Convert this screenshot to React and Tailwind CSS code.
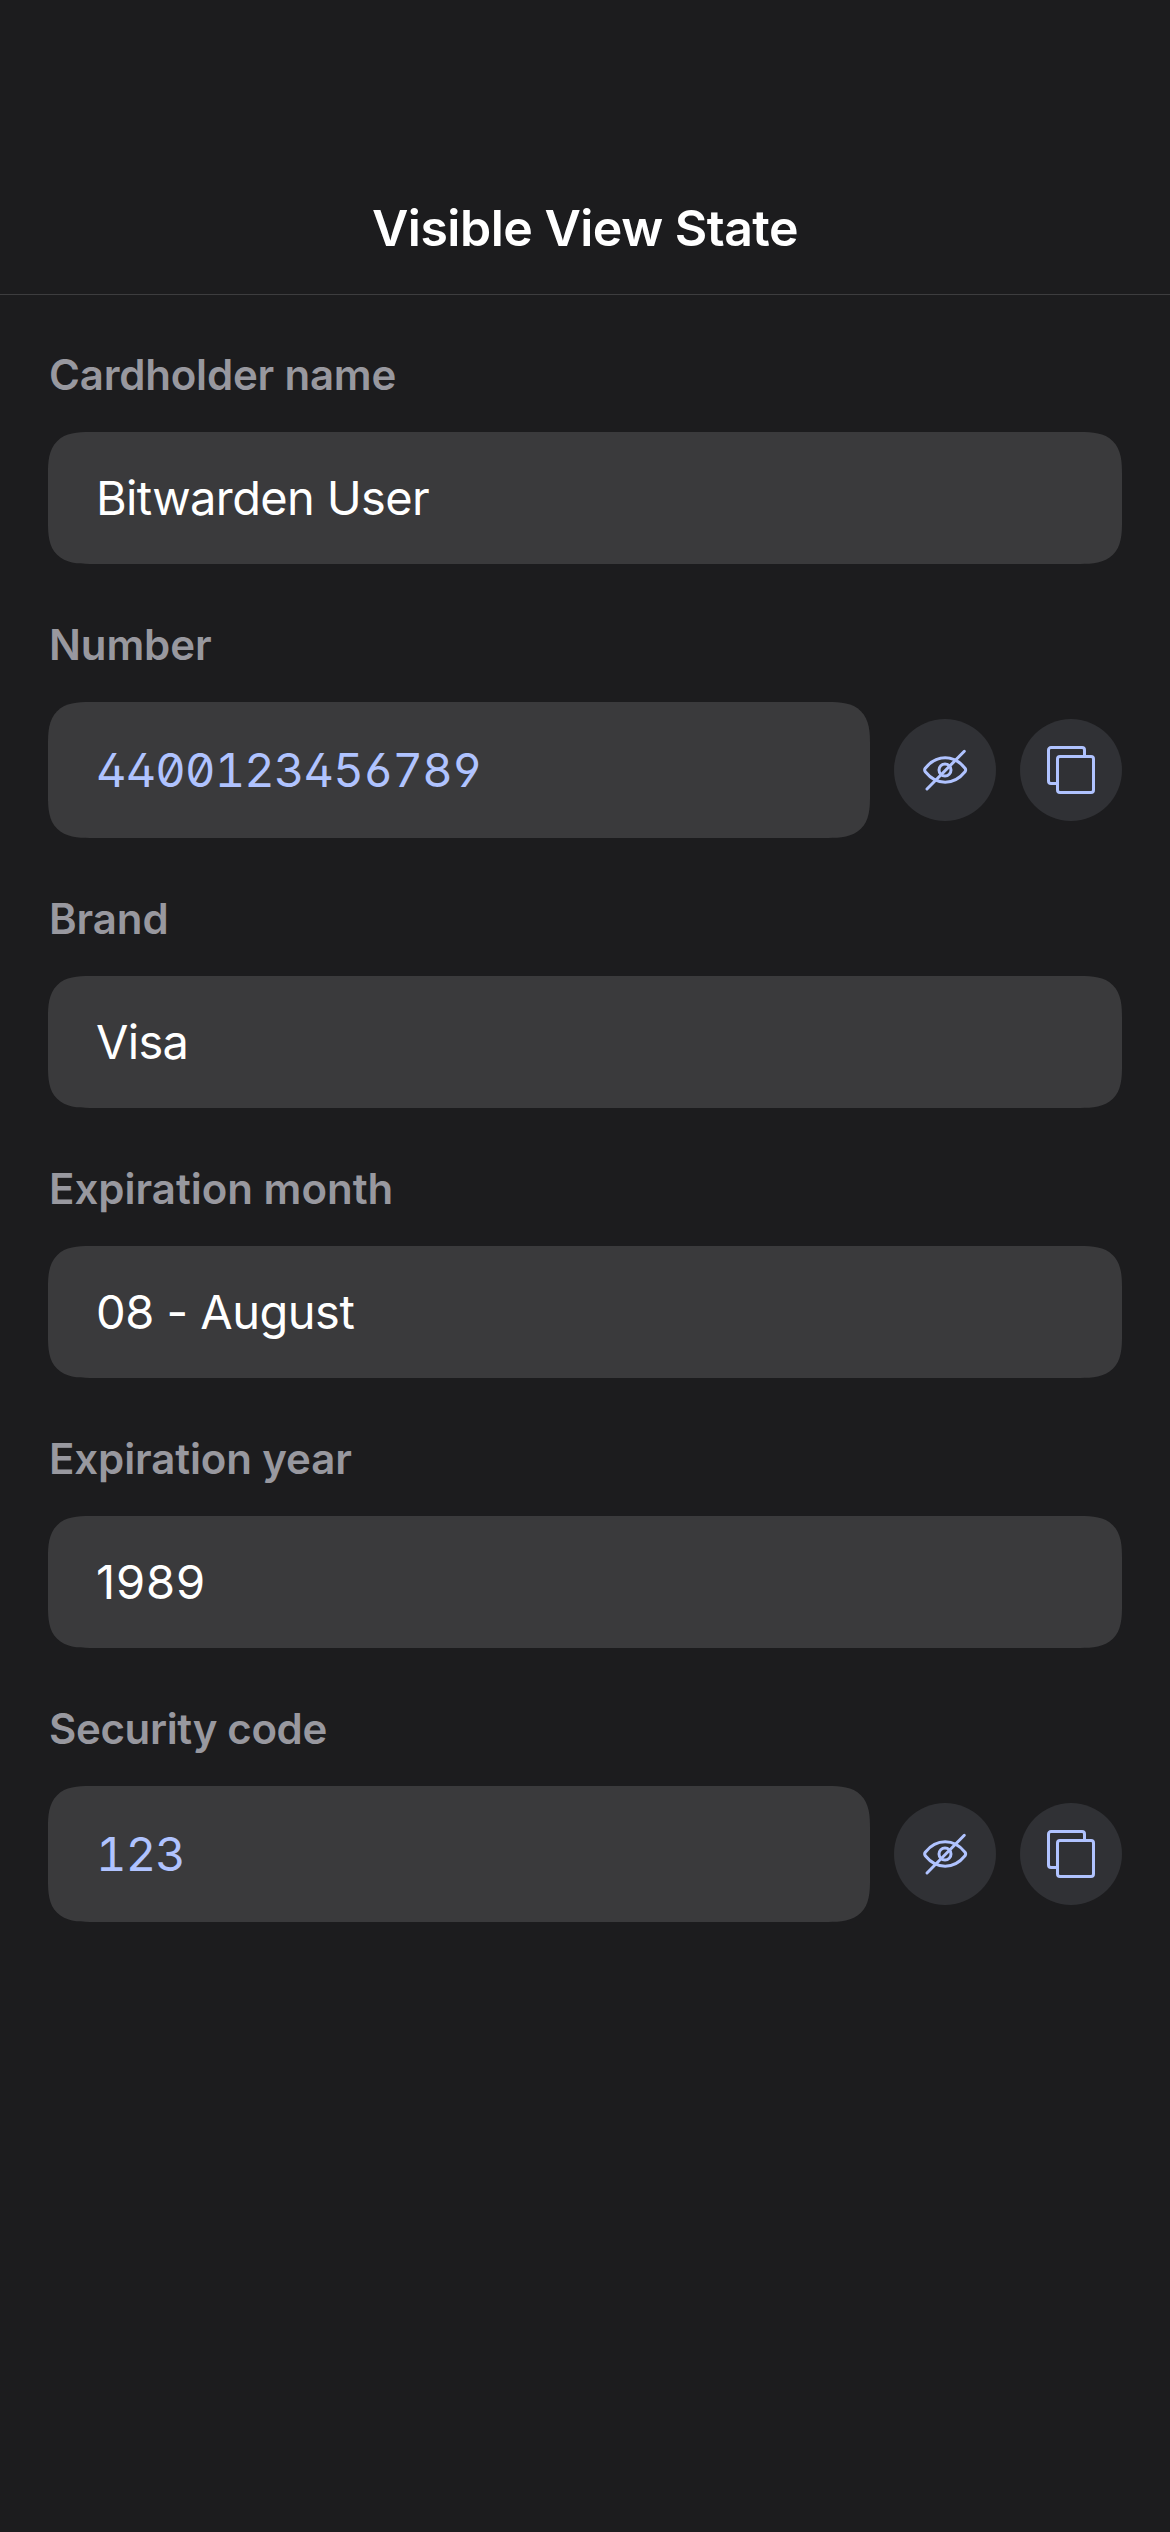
function EyeSlashIcon() {
  return (
    <svg width="48" height="48" viewBox="0 0 48 48" fill="none" stroke="currentColor" strokeWidth="3" strokeLinecap="round" strokeLinejoin="round" aria-hidden="true">
      <path d="M4.300 22.200C9.600 15.600 16.400 11.800 24.200 11.800s14.500 3.800 19.800 10.400q1.300 1.800 0 3.600C38.700 32.400 32 36.200 24.200 36.200S9.600 32.400 4.300 25.800q-1.300-1.800 0-3.600Z" />
      <circle cx="24" cy="24" r="6" />
      <path d="M6 43L43.300 5.300" />
    </svg>
  );
}

function CopyIcon() {
  return (
    <svg width="48" height="48" viewBox="0 0 48 48" fill="none" stroke="currentColor" strokeWidth="3" aria-hidden="true">
      <rect x="10.500" y="10.500" width="36" height="36" rx="2.500" />
      <path d="M37.500 10V4a2.500 2.500 0 0 0-2.500-2.500H4A2.500 2.500 0 0 0 1.500 4v31a2.500 2.500 0 0 0 2.500 2.500h6" />
    </svg>
  );
}

function IconButton({ label, children }) {
  return (
    <button type="button" aria-label={label} className="flex size-[102px] shrink-0 items-center justify-center rounded-full bg-[#303135] text-[#b0c3ff]">
      {children}
    </button>
  );
}

const fields = [
  { label: "Cardholder name", labelTracking: "tracking-[-0.2px]", value: "Bitwarden User", tracking: "tracking-[-0.64px]" },
  { label: "Number", labelTracking: "tracking-[-0.1px]", value: "4400123456789", secret: true },
  { label: "Brand", labelTracking: "tracking-[-0.1px]", value: "Visa", tracking: "tracking-[-0.7px]" },
  { label: "Expiration month", labelTracking: "tracking-normal", value: "08 - August", tracking: "tracking-[-0.5px]" },
  { label: "Expiration year", labelTracking: "tracking-[-0.12px]", value: "1989", tracking: "tracking-[0.9px]" },
  { label: "Security code", labelTracking: "tracking-[-0.35px]", value: "123", secret: true },
];

function Field({ label, labelTracking, value, tracking, secret }) {
  return (
    <div className="flex flex-col">
      <div className={`flex h-[138px] items-end pb-8 pl-px text-[42px] leading-[51px] font-semibold text-[#98989f] ${labelTracking}`}>{label}</div>
      <div className="flex items-center gap-6">
        {secret ? (
          <div className="flex h-[136px] flex-1 items-center rounded-[42px] bg-[#3a3a3c] px-12 pb-0.5 text-[47px] leading-[57px] tracking-[-0.82px] text-[#b0c3ff] [corner-shape:superellipse(1.5)] [font-feature-settings:'tnum','zero','cv02','cv03','cv04']">
            {value}
          </div>
        ) : (
          <div className={`flex h-[132px] flex-1 items-center rounded-[42px] bg-[#3a3a3c] px-12 pb-0.5 text-[47px] leading-[57px] text-white [corner-shape:superellipse(1.5)] ${tracking}`}>
            {value}
          </div>
        )}
        {secret && (
          <>
            <IconButton label={`Hide ${label}`}><EyeSlashIcon /></IconButton>
            <IconButton label={`Copy ${label}`}><CopyIcon /></IconButton>
          </>
        )}
      </div>
    </div>
  );
}

export default function App() {
  return (
    <div className="min-h-[2532px] bg-[#1c1c1e] font-['Inter',sans-serif]">
      <header className="flex h-[295px] items-end justify-center border-b border-[#3d3d3f] pb-9 text-[50px] leading-[60px] font-semibold tracking-[-0.5px] text-white">
        <h1>Visible View State</h1>
      </header>
      <main className="-mt-px flex flex-col px-12">
        {fields.map((f) => <Field key={f.label} {...f} />)}
      </main>
    </div>
  );
}
